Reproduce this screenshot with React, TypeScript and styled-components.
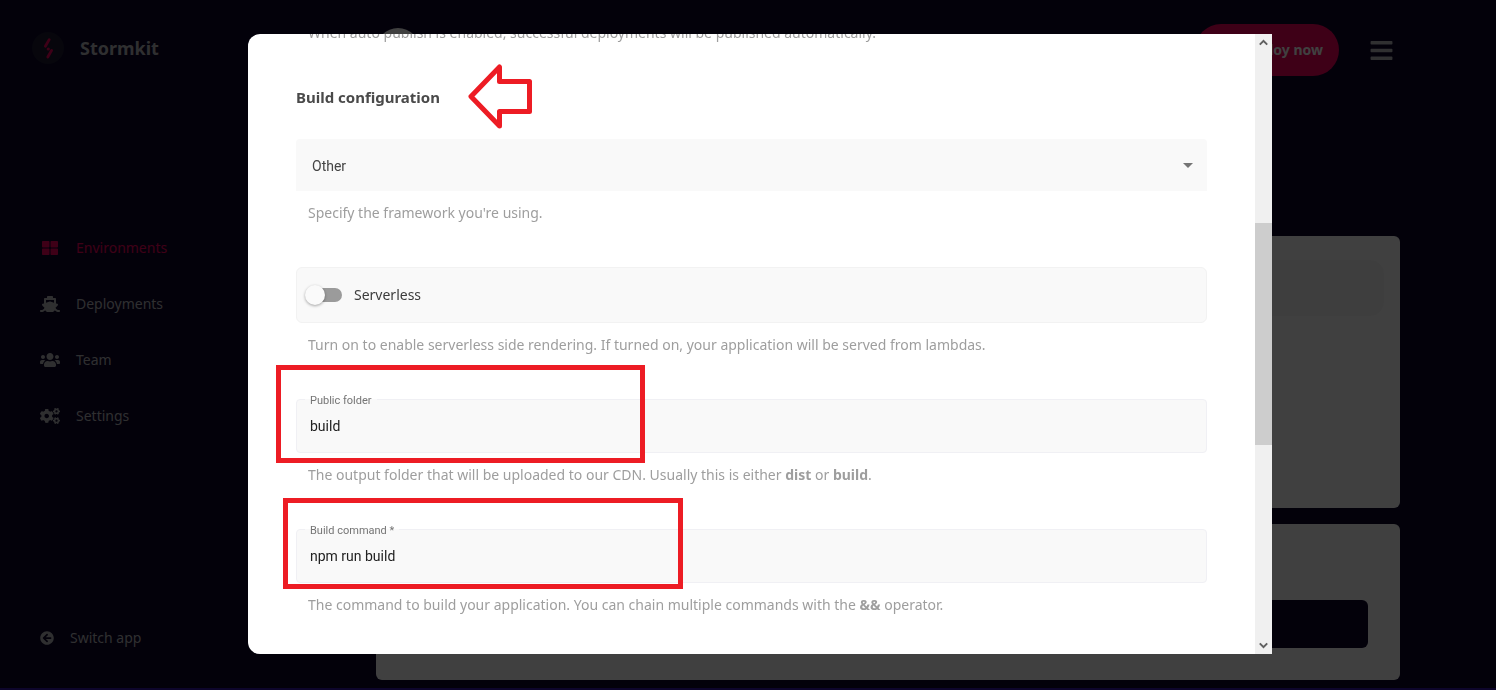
import React from "react";
import styled, { createGlobalStyle } from "styled-components";
import {
  FaArrowCircleLeft,
  FaBars,
  FaCogs,
  FaShip,
  FaThLarge,
  FaUsers,
} from "react-icons/fa";
import { MdArrowDropDown } from "react-icons/md";

const sans = `"Noto Sans", "Open Sans", sans-serif`;
const roboto = `Roboto, "Liberation Sans", sans-serif`;
const ink = "#0d052b";
const pink = "#f6005c";
const markRed = "#ed1c24";

const GlobalStyle = createGlobalStyle`
  *, *::before, *::after { box-sizing: border-box; }
  body { margin: 0; background: ${ink}; font-family: ${sans}; font-size: 14px; line-height: 20px; }
  button, input, select { font: inherit; }
`;

const Page = styled.div`
  display: grid;
  grid-template-columns: 376px 1fr;
  min-height: 100vh;
  padding-right: 96px;
  background: ${ink};
`;

const Sidebar = styled.aside`
  display: flex;
  flex-direction: column;
  padding: 32px 0 42px 40px;
  color: #bcbcc0;
`;

const Brand = styled.a`
  display: flex;
  align-items: center;
  gap: 16px;
  margin: 0 0 156px -8px;
  color: inherit;
  font-size: 18px;
  font-weight: 700;
  text-decoration: none;
`;

const Nav = styled.nav`
  display: flex;
  flex-direction: column;
`;

const NavLink = styled.a<{ $active?: boolean }>`
  display: flex;
  align-items: center;
  gap: 16px;
  height: 56px;
  color: ${(p) => (p.$active ? pink : "inherit")};
  text-decoration: none;

  svg {
    width: 20px;
    height: 16px;
  }
`;

const SwitchLink = styled.a`
  display: flex;
  align-items: center;
  gap: 16px;
  margin-top: auto;
  color: inherit;
  text-decoration: none;
`;

const Main = styled.main`
  display: flex;
  flex-direction: column;
  gap: 16px;
  padding: 24px 0 10px;
`;

const TopBar = styled.header`
  display: flex;
  align-items: center;
  margin-bottom: 144px;
`;

const Avatar = styled.span`
  width: 44px;
  height: 44px;
  margin-right: auto;
  border-radius: 50%;
  background: #fff;
`;

const DeployButton = styled.button`
  height: 52px;
  padding: 0 16px;
  min-width: 144px;
  border: 0;
  border-radius: 26px;
  background: ${pink};
  color: #fff;
  font-weight: 700;
  text-align: right;
`;

const MenuButton = styled.button`
  display: flex;
  margin-left: 24px;
  padding: 6px;
  border: 0;
  background: none;
  color: #c0c0c4;
  font-size: 25px;
`;

const Card = styled.section<{ $tall?: boolean }>`
  display: flex;
  align-items: ${(p) => (p.$tall ? "flex-start" : "flex-end")};
  min-height: ${(p) => (p.$tall ? 272 : 156)}px;
  padding: ${(p) => (p.$tall ? "24px 16px" : "32px")};
  border-radius: 6px;
  background: #fff;
`;

const CardRow = styled.div<{ $dark?: boolean }>`
  flex: 1;
  height: ${(p) => (p.$dark ? 48 : 56)}px;
  border-radius: ${(p) => (p.$dark ? 6 : 14)}px;
  background: ${(p) => (p.$dark ? ink : "#f8f8f8")};
`;

const Overlay = styled.div`
  position: fixed;
  inset: 0 0 2px;
  display: flex;
  padding: 34px 224px 34px 248px;
  background: rgba(0, 0, 0, 0.75);
`;

const Dialog = styled.div`
  display: flex;
  flex: 1;
  overflow: hidden;
  border-radius: 12px 0 0 12px;
  background: #fff;
`;

const DialogBody = styled.form`
  display: flex;
  flex: 1;
  flex-direction: column;
  gap: 44px;
  margin-top: -11px;
  padding: 0 48px;
`;

const Section = styled.div`
  display: flex;
  flex-direction: column;
  gap: 32px;
`;

const Heading = styled.h2`
  position: relative;
  margin: 0;
  color: #4a4a4a;
  font-size: 15px;
  line-height: 20px;
`;

const Field = styled.div`
  position: relative;
  display: flex;
  flex-direction: column;
  gap: 12px;
`;

const Hint = styled.p`
  margin: 0;
  padding-left: 12px;
  color: #9e9e9e;
`;

const SelectBox = styled.div`
  position: relative;
  display: flex;
  color: #757575;

  svg {
    position: absolute;
    top: 14px;
    right: 7px;
    width: 24px;
    height: 24px;
    pointer-events: none;
  }
`;

const Select = styled.select`
  appearance: none;
  width: 100%;
  height: 52px;
  padding: 2px 16px 0;
  border: 0;
  border-radius: 4px 4px 0 0;
  background: #f9f9f9;
  color: #444;
  font-family: ${roboto};
`;

const SwitchBox = styled.label`
  display: flex;
  align-items: center;
  gap: 12px;
  height: 56px;
  padding: 0 8px;
  border: 1px solid #f2f2f2;
  border-radius: 6px;
  background: #f9f9f9;
  color: #3c3c3c;
`;

const Switch = styled.input`
  appearance: none;
  position: relative;
  width: 37px;
  height: 20px;
  margin: 0;

  &::before {
    content: "";
    position: absolute;
    inset: 3px 0 3px 3px;
    border-radius: 7px;
    background: #9b9b9b;
  }

  &::after {
    content: "";
    position: absolute;
    top: 0;
    left: 0;
    width: 20px;
    height: 20px;
    border-radius: 50%;
    background: #fafafa;
    box-shadow: 0 1px 3px rgba(0, 0, 0, 0.35);
  }

  &:checked::after {
    left: 17px;
  }
`;

const InputBox = styled.div`
  position: relative;
  display: flex;
  height: 54px;
  border: 1px solid #f0f0f4;
  border-radius: 4px;
  background: #f9f9f9;
`;

const InputLabel = styled.label`
  position: absolute;
  top: -5px;
  left: 8px;
  padding: 0 5px;
  background: linear-gradient(#fff 4px, #f9f9f9 4px);
  color: #757575;
  font-family: ${roboto};
  font-size: 11px;
  line-height: 12px;
`;

const TextInput = styled.input`
  flex: 1;
  min-width: 0;
  padding: 0 13px;
  border: 0;
  background: none;
  color: #212121;
  font-family: ${roboto};
`;

const Highlight = styled.span<{ $x: number; $y: number; $w: number; $h: number }>`
  position: absolute;
  left: ${(p) => p.$x}px;
  top: ${(p) => p.$y}px;
  width: ${(p) => p.$w}px;
  height: ${(p) => p.$h}px;
  border: 5px solid ${markRed};
  pointer-events: none;
`;

const ArrowMark = styled.svg`
  position: absolute;
  top: -24px;
  left: 171px;
`;

const Scrollbar = styled.div`
  display: flex;
  flex-direction: column;
  width: 17px;
  background: #f0f0f0;
`;

const ScrollButton = styled.button`
  display: flex;
  align-items: center;
  justify-content: center;
  width: 17px;
  height: 17px;
  padding: 0;
  border: 0;
  background: none;
`;

const Gap = styled.div<{ $share: number }>`
  flex: ${(p) => p.$share} 1 0;
`;

const Thumb = styled(Gap)`
  background: #cdcdcd;
`;

const Logo = () => (
  <svg width="32" height="32" viewBox="0 0 32 32" aria-hidden="true">
    <circle cx="16" cy="16" r="16" fill="#1c1b33" />
    <g stroke={pink} strokeWidth="2.8" strokeLinecap="round">
      <path d="M17.2 7.6 13.4 14.2" />
      <path d="M19.6 18.4 15.8 25" />
    </g>
    <circle cx="16.3" cy="17" r="1.6" fill={pink} />
  </svg>
);

const navItems = [
  { label: "Environments", icon: FaThLarge, active: true },
  { label: "Deployments", icon: FaShip },
  { label: "Team", icon: FaUsers },
  { label: "Settings", icon: FaCogs },
];

export default function App() {
  return (
    <>
      <GlobalStyle />
      <Page>
        <Sidebar>
          <Brand href="#">
            <Logo />
            Stormkit
          </Brand>
          <Nav>
            {navItems.map(({ label, icon: Icon, active }) => (
              <NavLink key={label} href="#" $active={active}>
                <Icon />
                {label}
              </NavLink>
            ))}
          </Nav>
          <SwitchLink href="#">
            <FaArrowCircleLeft />
            Switch app
          </SwitchLink>
        </Sidebar>
        <Main>
          <TopBar>
            <Avatar />
            <DeployButton type="button">Deploy now</DeployButton>
            <MenuButton type="button" aria-label="Menu">
              <FaBars />
            </MenuButton>
          </TopBar>
          <Card $tall>
            <CardRow />
          </Card>
          <Card>
            <CardRow $dark />
          </Card>
        </Main>
      </Page>

      <Overlay>
        <Dialog role="dialog" aria-modal="true" aria-labelledby="build-heading">
          <DialogBody>
            <Hint>
              When auto publish is enabled, successful deployments will be published automatically.
            </Hint>
            <Section>
              <Heading id="build-heading">
                Build configuration
                <ArrowMark width="67" height="67" viewBox="0 0 67 67" aria-hidden="true">
                  <path
                    d="M32.5 4 V18.5 H62.5 V48.5 H32.5 V63 L4 33.5 Z"
                    fill="none"
                    stroke={markRed}
                    strokeWidth="5"
                    strokeLinejoin="round"
                  />
                </ArrowMark>
              </Heading>
              <Field>
                <SelectBox>
                  <Select aria-label="Framework" defaultValue="other">
                    <option value="other">Other</option>
                  </Select>
                  <MdArrowDropDown />
                </SelectBox>
                <Hint>Specify the framework you're using.</Hint>
              </Field>
            </Section>
            <Field>
              <SwitchBox>
                <Switch type="checkbox" role="switch" />
                Serverless
              </SwitchBox>
              <Hint>
                Turn on to enable serverless side rendering. If turned on, your application will be
                served from lambdas.
              </Hint>
            </Field>
            <Field>
              <InputBox>
                <InputLabel htmlFor="public-folder">Public folder</InputLabel>
                <TextInput id="public-folder" defaultValue="build" />
              </InputBox>
              <Hint>
                The output folder that will be uploaded to our CDN. Usually this is either{" "}
                <b>dist</b> or <b>build</b>.
              </Hint>
              <Highlight $x={-20} $y={-34} $w={369} $h={98} />
            </Field>
            <Field>
              <InputBox>
                <InputLabel htmlFor="build-command">Build command *</InputLabel>
                <TextInput id="build-command" defaultValue="npm run build" required />
              </InputBox>
              <Hint>
                The command to build your application. You can chain multiple commands with the{" "}
                <b>&amp;&amp;</b> operator.
              </Hint>
              <Highlight $x={-13} $y={-31} $w={400} $h={91} />
            </Field>
          </DialogBody>
          <Scrollbar>
            <ScrollButton type="button" aria-label="Scroll up">
              <svg width="9" height="7" viewBox="0 0 9 7">
                <path d="M0.8 5.6 4.5 1.9 8.2 5.6" fill="none" stroke="#606060" strokeWidth="2" />
              </svg>
            </ScrollButton>
            <Gap $share={172} />
            <Thumb $share={222} />
            <Gap $share={192} />
            <ScrollButton type="button" aria-label="Scroll down">
              <svg width="9" height="7" viewBox="0 0 9 7">
                <path d="M0.8 1.4 4.5 5.1 8.2 1.4" fill="none" stroke="#606060" strokeWidth="2" />
              </svg>
            </ScrollButton>
          </Scrollbar>
        </Dialog>
      </Overlay>
    </>
  );
}
